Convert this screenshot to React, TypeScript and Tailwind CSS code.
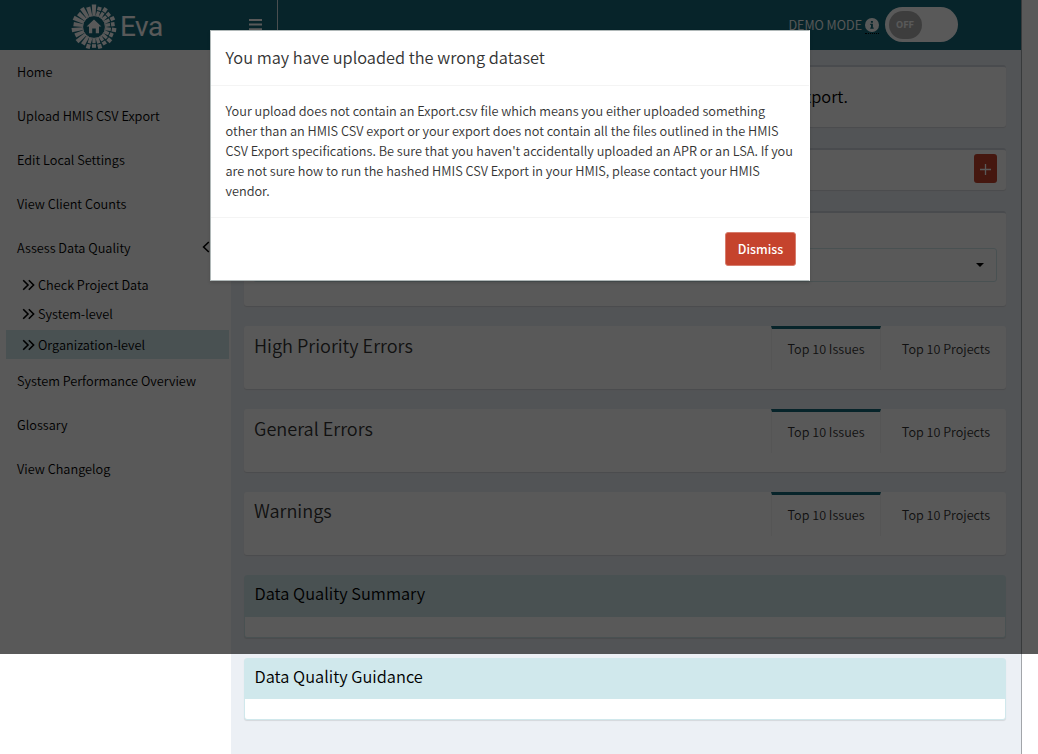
import React from "react";

const rays = Array.from({ length: 22 }, (_, i) => i);

function Logo() {
  return (
    <div className="flex items-center text-white">
      <svg viewBox="0 0 46 46" className="h-[46px] w-[46px]">
        {rays.map((i) => {
          const split = i > 0 && i < 13;
          return (
            <g key={i} transform={`rotate(${(i * 360) / 22} 23 23)`} fill="currentColor">
              {split ? (
                <>
                  <rect x="21" y={i % 2 ? 2.2 : 0.6} width="4" height={i % 2 ? 3.6 : 4.4} />
                  <rect x="21.4" y={i % 2 ? 6.8 : 6} width="3.2" height={i % 2 ? 4.8 : 5.6} />
                </>
              ) : (
                <path d={i % 2 ? "M20.8 2.4h4.4l-.7 9.3h-3z" : "M20.8.6h4.4l-.7 11h-3z"} />
              )}
            </g>
          );
        })}
        <circle cx="23" cy="23" r="11.4" fill="none" stroke="currentColor" strokeWidth="1" />
        <path d="M23 15.6l7.4 6.8h-2.4v6.9h-3.2v-4.9h-3.6v4.9H18v-6.9h-2.4z" fill="currentColor" />
      </svg>
      <span className="ml-[3px] font-[Roboto] text-[28px] leading-[46px] font-normal tracking-[-0.5px]">Eva</span>
    </div>
  );
}

function NavItem({ label, arrow }: { label: string; arrow?: boolean }) {
  return (
    <div className="flex h-[44px] items-center justify-between pr-[21px] pl-[17px]">
      <span>{label}</span>
      {arrow && (
        <svg viewBox="0 0 8 12" className="mb-[3px] h-[12px] w-[8px]" fill="none" stroke="currentColor" strokeWidth="1.6">
          <path d="M6.8 1L1.6 6l5.2 5" />
        </svg>
      )}
    </div>
  );
}

function SubItem({ label, active }: { label: string; active?: boolean }) {
  return (
    <div className={`ml-[6px] mr-[2px] flex items-center pl-[16px] ${active ? "mt-[2px] h-[29px] bg-[#d0e8ec]" : "h-[29px]"}`}>
      <svg viewBox="0 0 13 12" className="mr-[3px] h-[12px] w-[13px]" fill="none" stroke="currentColor" strokeWidth="1.6">
        <path d="M1.2 1.2L6 6l-4.8 4.8M6.8 1.2L11.6 6l-4.8 4.8" />
      </svg>
      <span>{label}</span>
    </div>
  );
}

function ErrorCard({ title, className, titleClass }: { title: string; className: string; titleClass: string }) {
  return (
    <div className={`flex justify-between rounded-[3px] bg-white shadow-[0_1px_1px_rgba(0,0,0,0.1)] ${className}`}>
      <div className={`pl-[10px] text-[18.1px] leading-[26px] font-[350] text-[#333] ${titleClass}`}>{title}</div>
      <div className="flex h-[44px] text-[12.6px] leading-[20px] text-[#333]">
        <div className="w-[110px] border-x border-t-[3px] border-x-[#f4f4f4] border-t-[#16697a] pt-[10px] text-center">Top 10 Issues</div>
        <div className="w-[125px] pt-[13px] pl-[5px] text-center">Top 10 Projects</div>
      </div>
    </div>
  );
}

function SolidCard({ title, className }: { title: string; className: string }) {
  return (
    <div className={`rounded-[3px] border border-[#d0e8ec] bg-white shadow-[0_1px_1px_rgba(0,0,0,0.1)] ${className}`}>
      <div className="h-[40.5px] bg-[#d0e8ec] pt-[5px] pl-[9.5px] text-[16.4px] leading-[24px] font-[350] text-black">{title}</div>
    </div>
  );
}

export default function App() {
  return (
    <div className="relative h-[754px] w-[1038px] overflow-hidden bg-white font-['Noto_Sans_CJK_SC',sans-serif] text-[12.73px] leading-[20px] font-[350] text-black">
      <div className="flex h-full w-[1022px] flex-col border-r border-[#a2a5a9]">
        <header className="flex h-[50px] shrink-0 bg-[#16697a] text-white">
          <div className="flex w-[231px] items-center pt-[3px] pl-[71px]">
            <Logo />
          </div>
          <div className="flex w-[47px] justify-center border-r border-[#d5dfe2] pt-[19px]">
            <svg viewBox="0 0 13 12" className="mr-[-3px] h-[12px] w-[13px]" fill="currentColor">
              <path d="M0 0h13v2H0zM0 4.6h13v2H0zM0 9.2h13v2H0z" />
            </svg>
          </div>
          <div className="flex flex-1 items-start justify-end pr-[63px]">
            <span className="mt-[15px] text-[12.6px]">DEMO MODE</span>
            <span className="mt-[18px] ml-[3px] flex h-[16px] border-b border-dotted border-black">
              <svg viewBox="0 0 14 14" className="h-[14px] w-[14px]">
                <circle cx="7" cy="7" r="7" fill="white" />
                <path d="M5.9 3h2v1.8h-2zM5.2 5.8h2.7v3.6h.8v1.3H5.2V9.4H6V7.1h-.8z" fill="#16697a" />
              </svg>
            </span>
            <div className="mt-[7px] ml-[6px] flex h-[35px] w-[73px] items-center rounded-full bg-white pl-[4px]">
              <div className="flex h-[28px] w-[33px] items-center justify-center rounded-full bg-[#b0b0b0] pr-[1px] pb-[2px] text-[9.3px] font-bold text-white">OFF</div>
            </div>
          </div>
        </header>
        <div className="flex flex-1">
          <nav className="w-[231px] shrink-0 bg-white">
            <NavItem label="Home" />
            <NavItem label="Upload HMIS CSV Export" />
            <NavItem label="Edit Local Settings" />
            <NavItem label="View Client Counts" />
            <NavItem label="Assess Data Quality" arrow />
            <SubItem label="Check Project Data" />
            <SubItem label="System-level" />
            <SubItem label="Organization-level" active />
            <NavItem label="System Performance Overview" />
            <NavItem label="Glossary" />
            <NavItem label="View Changelog" />
          </nav>
          <main className="flex-1 bg-[#ecf0f5] pt-[15px] pr-[15px] pl-[13px]">
            <div className="flex h-[62px] justify-end rounded-[3px] border-t-[2px] border-[#d2d6de] bg-white pt-[17px] pr-[158px] text-[16.4px] leading-[24px] shadow-[0_1px_1px_rgba(0,0,0,0.1)]">Export.</div>
            <div className="mt-[21px] flex h-[42px] justify-end rounded-[3px] border-t-[2px] border-[#d2d6de] bg-white pt-[4px] pr-[9px] shadow-[0_1px_1px_rgba(0,0,0,0.1)]">
              <div className="flex h-[29px] w-[23px] items-center justify-center rounded-[3px] bg-[#c5432d] pt-[2px]">
                <svg viewBox="0 0 11 11" className="h-[11px] w-[11px]" stroke="white" strokeWidth="1.3">
                  <path d="M5.5 0v11M0 5.5h11" />
                </svg>
              </div>
            </div>
            <div className="mt-[21px] h-[95px] rounded-[3px] border-t-[2px] border-[#d2d6de] bg-white px-[9px] pt-[35px] shadow-[0_1px_1px_rgba(0,0,0,0.1)]">
              <div className="flex h-[34px] items-center justify-end rounded-[3px] border border-[#d0e8ec] pr-[12px] pb-[1px]">
                <svg viewBox="0 0 8 4" className="h-[4px] w-[8px]">
                  <path d="M0 0h8L4 4z" />
                </svg>
              </div>
            </div>
            <ErrorCard title="High Priority Errors" className="mt-[20px] h-[63px]" titleClass="pt-[6px]" />
            <ErrorCard title="General Errors" className="mt-[20px] h-[63px]" titleClass="pt-[6px]" />
            <ErrorCard title="Warnings" className="mt-[20px] h-[63px]" titleClass="pt-[5px]" />
            <SolidCard title="Data Quality Summary" className="mt-[20.4px] h-[62.3px]" />
            <SolidCard title="Data Quality Guidance" className="mt-[20px] h-[62px]" />
          </main>
        </div>
      </div>
      <div className="absolute inset-x-0 top-0 flex h-[654px] items-start bg-black/65 pt-[30px] pl-[210px]">
        <div className="h-[251px] w-[600px] border border-[#b0b8b8] border-r-white bg-white text-[#333] shadow-[0_2px_3px_rgba(0,0,0,0.125)]">
          <div className="h-[55px] border-b border-[#f4f4f4] pt-[13px] pl-[14.5px] text-[16.36px] leading-[26px]">You may have uploaded the wrong dataset</div>
          <div className="h-[132px] border-b border-[#f4f4f4] pt-[15px] pl-[14.5px] whitespace-nowrap">
            <p>Your upload does not contain an Export.csv file which means you either uploaded something</p>
            <p>other than an HMIS CSV export or your export does not contain all the files outlined in the HMIS</p>
            <p>CSV Export specifications. Be sure that you haven't accidentally uploaded an APR or an LSA. If you</p>
            <p>are not sure how to run the hashed HMIS CSV Export in your HMIS, please contact your HMIS</p>
            <p>vendor.</p>
          </div>
          <div className="flex justify-end pt-[14px] pr-[13px]">
            <button className="h-[34px] w-[71px] rounded-[3px] border border-[#d77c6c] bg-[#c5432d] text-[12.4px] font-medium text-white">Dismiss</button>
          </div>
        </div>
      </div>
    </div>
  );
}
